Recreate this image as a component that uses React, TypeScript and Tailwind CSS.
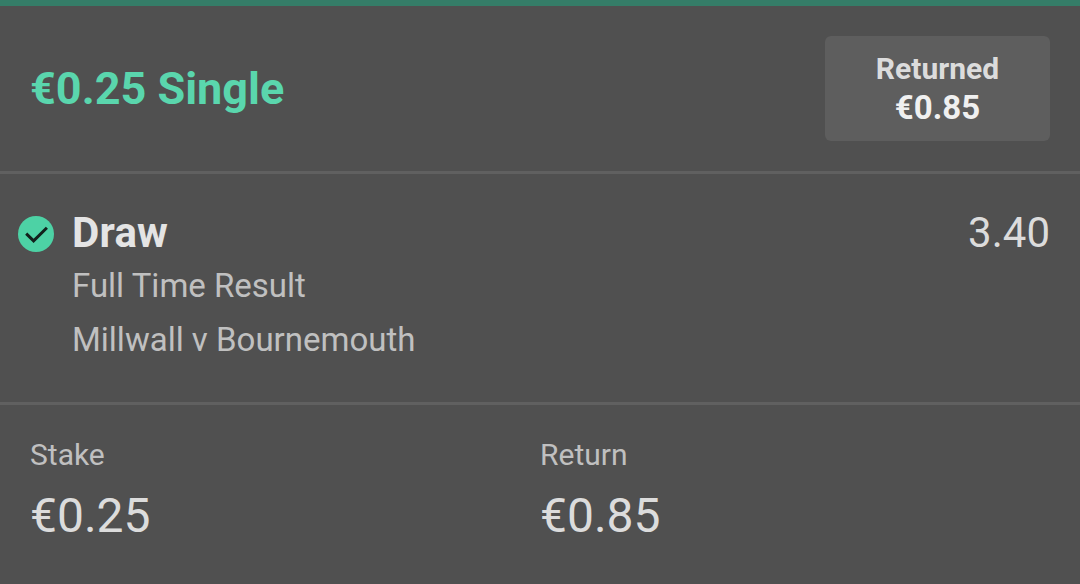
type Selection = {
  name: string
  market: string
  fixture: string
  odds: string
}

const selection: Selection = {
  name: 'Draw',
  market: 'Full Time Result',
  fixture: 'Millwall v Bournemouth',
  odds: '3.40',
}

const totals = [
  { label: 'Stake', value: '€0.25' },
  { label: 'Return', value: '€0.85' },
]

function WonIcon() {
  return (
    <svg className="h-9 w-9 shrink-0" viewBox="0 0 36 36" fill="none">
      <circle cx="18" cy="18" r="18" fill="#4dd2a5" />
      <path d="M8.2 17.6L15.6 24.8L28.9 11.8" stroke="#12211c" strokeWidth="3" />
    </svg>
  )
}

export default function App() {
  return (
    <div className="h-[584px] w-[1080px] overflow-hidden border-t-[6px] border-[#357d68] bg-[#505050] font-['Roboto',sans-serif]">
      {/* Bet header */}
      <header className="flex h-[168px] items-start justify-between border-b-[3px] border-[#606060] px-[30px] pt-[30px]">
        <h1 className="mt-[27px] text-[45px] leading-[52px] font-bold text-[#5ad6ad]">€0.25 Single</h1>
        <div className="flex h-[105px] w-[225px] flex-col items-center rounded-md bg-[#5e5e5e] pt-[14px] font-bold">
          <span className="text-[30px] leading-[38px] text-[#dcdcdc]">Returned</span>
          <span className="text-[33px] leading-[40px] text-[#f0f0f0]">€0.85</span>
        </div>
      </header>

      {/* Selection */}
      <section className="flex h-[231px] items-start border-b-[3px] border-[#606060] pt-[34px] pr-[30px] pl-[18px]">
        <div className="mt-2">
          <WonIcon />
        </div>
        <div className="ml-[18px] flex-1">
          <h2 className="mb-px text-[42px] leading-[50px] font-bold tracking-[0.2px] text-[#e4e4e4]">{selection.name}</h2>
          <p className="text-[33px] leading-[54px] text-[#c0c0c0]">{selection.market}</p>
          <p className="text-[33px] leading-[54px] text-[#c0c0c0]">{selection.fixture}</p>
        </div>
        <span className="text-[42px] leading-[50px] text-[#dcdcdc]">{selection.odds}</span>
      </section>

      {/* Totals */}
      <footer className="grid grid-cols-[510px_1fr] pt-[30px] pl-[30px]">
        {totals.map((item) => (
          <div key={item.label}>
            <div className="text-[30px] leading-[40px] text-[#c0c0c0]">{item.label}</div>
            <div className="mt-[11px] text-[48px] leading-[60px] text-[#dcdcdc]">{item.value}</div>
          </div>
        ))}
      </footer>
    </div>
  )
}
